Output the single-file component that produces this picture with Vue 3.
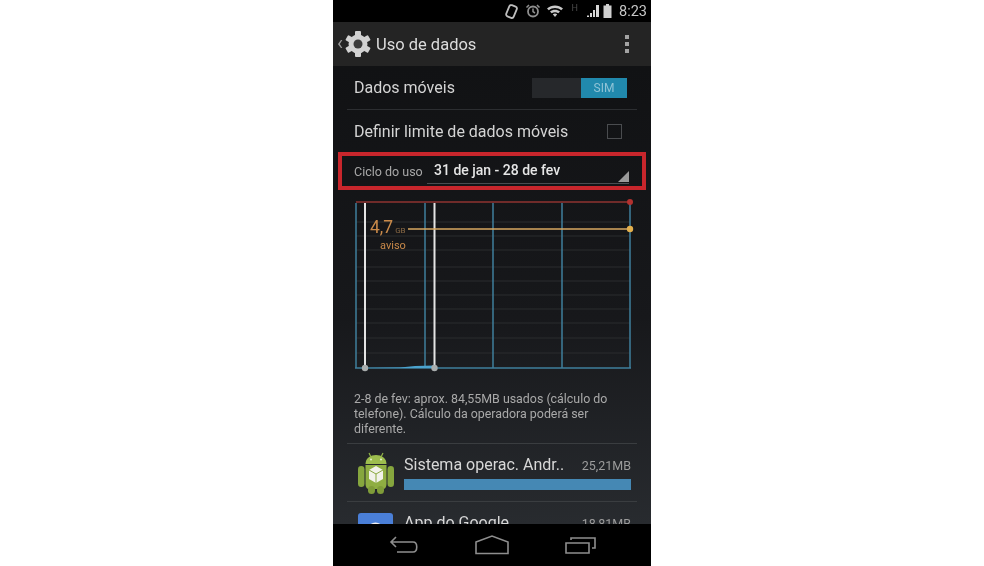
<script setup>
const gridRows = [222, 236, 250, 267, 281, 295, 309, 323, 338, 353]
const blueCols = [356, 425, 493, 562, 630]
</script>

<template>
  <div class="page">
    <div class="phone">
      <header class="status">
        <svg class="status-icon rotate" width="15" height="17" viewBox="0 0 15 17">
          <rect x="3.500" y="2.500" width="8" height="12" rx="2" transform="rotate(22 7.500 8.500)" fill="none" stroke="#bdbdbd" stroke-width="1.800" />
        </svg>
        <svg class="status-icon alarm" width="16" height="16" viewBox="0 0 16 16">
          <circle cx="8" cy="8.500" r="5" fill="none" stroke="#8f8f8f" stroke-width="1.800" />
          <path d="M8 5.500V8.700L10 10M1.500 4.500L4 2M14.500 4.500L12 2" fill="none" stroke="#8f8f8f" stroke-width="1.500" />
        </svg>
        <svg class="status-icon wifi" width="18" height="14" viewBox="0 0 18 14">
          <path d="M1 4.500C5.500 .5 12.500 .5 17 4.500L15.200 6.300C11.500 3.200 6.500 3.200 2.800 6.300Z" fill="#c9c9c9" />
          <path d="M4 7.500C6.800 5.200 11.200 5.200 14 7.500L12.300 9.200C10.400 7.800 7.600 7.800 5.700 9.200Z" fill="#c9c9c9" />
          <path d="M6.800 10.200C8 9.300 10 9.300 11.200 10.200L9 13Z" fill="#c9c9c9" />
        </svg>
        <span class="h-mark">H</span>
        <svg class="status-icon signal" width="15" height="14" viewBox="0 0 15 14">
          <path d="M1 13H3V11.500H1ZM4 13H6V9H4ZM7 13H9V6H7ZM10 13H13V1H10Z" fill="#d6d6d6" />
        </svg>
        <svg class="status-icon battery" width="9" height="14" viewBox="0 0 9 14">
          <path d="M3 0H6V1.500H8.500V14H.5V1.500H3Z" fill="#cfcfcf" />
        </svg>
        <span class="clock">8:23</span>
      </header>

      <div class="action-bar">
        <span class="back">‹</span>
        <svg class="gear" width="28" height="28" viewBox="0 0 28 28">
          <g fill="#d2d2d2">
            <rect x="11" y="1" width="6" height="26" rx="1" />
            <rect x="11" y="1" width="6" height="26" rx="1" transform="rotate(60 14 14)" />
            <rect x="11" y="1" width="6" height="26" rx="1" transform="rotate(120 14 14)" />
          </g>
          <circle cx="14" cy="14" r="7.500" fill="none" stroke="#d2d2d2" stroke-width="4" />
          <circle cx="14" cy="14" r="4.500" fill="#3a3a3a" />
        </svg>
        <h1 class="title">Uso de dados</h1>
        <div class="overflow">
          <i></i><i></i><i></i>
        </div>
      </div>

      <main class="content">
        <div class="row row-first">
          <span class="label">Dados móveis</span>
          <div class="switch">
            <span class="switch-on">SIM</span>
          </div>
        </div>
        <div class="row row-limit">
          <span class="label">Definir limite de dados móveis</span>
          <span class="checkbox"></span>
        </div>

        <div class="cycle">
          <span class="cycle-label">Ciclo do uso</span>
          <div class="spinner">
            <span class="spinner-value">31 de jan - 28 de fev</span>
            <svg class="spinner-mark" width="11" height="11" viewBox="0 0 11 11">
              <path d="M11 0V11H0Z" fill="#9a9a9a" />
            </svg>
          </div>
          <div class="highlight"></div>
        </div>

        <div class="chart">
          <svg width="318" height="184" viewBox="333 194 318 184">
            <line v-for="y in gridRows" :key="y" x1="356" x2="630" :y1="y" :y2="y" stroke="#2a2c2f" stroke-width="1" />
            <line v-for="x in blueCols" :key="x" :x1="x" :x2="x" y1="203" y2="368" stroke="#3f7f9c" stroke-width="1.500" />
            <line x1="355" x2="631" y1="368" y2="368" stroke="#3f7f9c" stroke-width="1.500" />
            <path d="M365 368L400 367.500L415 366L434 365.500V368Z" fill="#4ba3cf" />
            <line x1="356" x2="630" y1="202" y2="202" stroke="#8f3331" stroke-width="1.500" />
            <circle cx="630" cy="202" r="3" fill="#b3312f" />
            <line x1="365" x2="365" y1="203" y2="368" stroke="#e4e4e4" stroke-width="2" />
            <line x1="434.500" x2="434.500" y1="203" y2="368" stroke="#e4e4e4" stroke-width="2" />
            <line x1="408" x2="630" y1="229" y2="229" stroke="#d9a860" stroke-width="1.500" />
            <circle cx="630" cy="229" r="3.200" fill="#e3b04e" />
            <circle cx="365" cy="368" r="3.200" fill="#a9adad" />
            <circle cx="434.500" cy="368" r="3.200" fill="#a9adad" />
          </svg>
          <div class="warn">
            <div class="warn-value">4,7<small>GB</small></div>
            <div class="warn-label">aviso</div>
          </div>
        </div>

        <p class="note">2-8 de fev: aprox. 84,55MB usados (cálculo do telefone). Cálculo da operadora poderá ser diferente.</p>

        <div class="app">
          <svg class="app-icon" width="40" height="44" viewBox="0 0 40 44">
            <rect x="2" y="15" width="6.500" height="21" rx="3.250" fill="#86a63e" />
            <rect x="31.500" y="15" width="6.500" height="21" rx="3.250" fill="#86a63e" />
            <path d="M9.500 13C9.500 1 30.500 1 30.500 13Z" fill="#9dbd4e" />
            <path d="M9.500 14H30.500V33C30.500 36 29 38 27 38H13C11 38 9.500 36 9.500 33Z" fill="#8fae42" />
            <rect x="12" y="35" width="7" height="8" rx="3.500" fill="#7f9c39" />
            <rect x="21" y="35" width="7" height="8" rx="3.500" fill="#7f9c39" />
            <path d="M13 2L15 6M27 2L25 6" stroke="#93b548" stroke-width="1.200" />
            <circle cx="15" cy="8.500" r="1" fill="#e8efd2" />
            <circle cx="25" cy="8.500" r="1" fill="#e8efd2" />
            <path d="M20 15L27 19V28L20 32L13 28V19Z" fill="#f2f2ea" />
            <path d="M13 19L20 23L27 19M20 23V32" fill="none" stroke="#8aa93f" stroke-width="1" />
          </svg>
          <div class="app-body">
            <div class="app-line">
              <span class="app-name">Sistema operac. Andr..</span>
              <span class="app-size">25,21MB</span>
            </div>
            <div class="bar"></div>
          </div>
        </div>

        <div class="app">
          <svg class="app-icon" width="40" height="44" viewBox="0 0 40 44">
            <rect x="2" y="4" width="35" height="36" rx="3" fill="#4a7fd8" />
            <circle cx="19.500" cy="22" r="7" fill="none" stroke="#f0f0f0" stroke-width="3" />
          </svg>
          <div class="app-body">
            <div class="app-line">
              <span class="app-name">App do Google</span>
              <span class="app-size">18,81MB</span>
            </div>
            <div class="bar bar-second"></div>
          </div>
        </div>
      </main>

      <footer class="nav">
        <svg width="30" height="20" viewBox="0 0 30 20">
          <path d="M7 2L2 7L7 12M2 7H24C29 7 29 17 24 17H8" fill="none" stroke="#8e8e8e" stroke-width="1.600" />
        </svg>
        <svg width="34" height="20" viewBox="0 0 34 20">
          <path d="M1 7L17 1L33 7V18.500H1Z" fill="none" stroke="#8e8e8e" stroke-width="1.600" />
        </svg>
        <svg width="32" height="20" viewBox="0 0 32 20">
          <path d="M1 8H24V18H1ZM6 5V3H30V13H27" fill="none" stroke="#8e8e8e" stroke-width="1.600" />
        </svg>
      </footer>
    </div>
  </div>
</template>

<style scoped>
.page {
  width: 984px;
  height: 566px;
  background: #fff;
  display: flex;
  padding-left: 333px;
  box-sizing: border-box;
  overflow: hidden;
  font-family: Roboto, "Liberation Sans", sans-serif;
}
.phone {
  width: 318px;
  height: 566px;
  display: flex;
  flex-direction: column;
  background: #000;
  filter: blur(0.5px);
}
.status {
  height: 22px;
  flex: none;
  background: #000;
  display: flex;
  align-items: center;
  justify-content: flex-end;
  padding-right: 4px;
  color: #c8c8c8;
}
.status-icon { flex: none; }
.rotate { margin-right: 6px; }
.alarm { margin-right: 5px; }
.h-mark {
  font-size: 9px;
  color: #4a4a4a;
  margin: -6px 8px 0 8px;
}
.signal { margin-right: 2px; }
.battery { margin-right: 7px; }
.clock {
  font-size: 14.500px;
  color: #c6c6c6;
}
.action-bar {
  height: 44px;
  flex: none;
  background: #242424;
  display: flex;
  align-items: center;
  padding-left: 4px;
  padding-right: 22px;
  box-sizing: border-box;
}
.back {
  font-size: 20px;
  line-height: 20px;
  color: #9a9a9a;
  width: 8px;
  margin-top: -3px;
}
.gear { margin-right: 4px; flex: none; margin-left: -1px; }
.title {
  flex: 1;
  margin: 0;
  font-size: 16.500px;
  font-weight: 400;
  color: #dcdcdc;
}
.overflow {
  display: flex;
  flex-direction: column;
  gap: 3px;
}
.overflow i {
  display: block;
  width: 4px;
  height: 4px;
  background: #a3a3a3;
}
.content {
  flex: 1;
  min-height: 0;
  overflow: hidden;
  background: linear-gradient(180deg, #111214 0%, #17181b 55%, #282b2f 100%);
  display: flex;
  flex-direction: column;
  padding: 0 14px;
}
.row {
  flex: none;
  display: flex;
  align-items: center;
  justify-content: space-between;
  padding: 0 7px;
}
.row-first {
  height: 43px;
  border-bottom: 1px solid #2c2e31;
}
.row-limit { height: 42px; }
.label {
  font-size: 16px;
  color: #d4d4d4;
}
.switch {
  width: 95px;
  height: 20px;
  background: #26282b;
  display: flex;
  justify-content: flex-end;
  margin-right: 3px;
}
.switch-on {
  width: 46px;
  background: #2189ad;
  color: #8fc3d6;
  font-size: 12px;
  line-height: 20px;
  text-align: center;
}
.checkbox {
  width: 13px;
  height: 13px;
  border: 1px solid #4a4c4f;
  margin-right: 8px;
}
.cycle {
  position: relative;
  flex: none;
  height: 38px;
  margin: 0 -9px;
  padding-left: 16px;
  display: flex;
  align-items: center;
}
.cycle-label {
  font-size: 12.500px;
  color: #a8a8a8;
  margin-right: 3px;
  width: 70px;
  flex: none;
}
.spinner {
  position: relative;
  width: 202px;
  height: 25px;
  display: flex;
  align-items: center;
  border-bottom: 1px solid #4a4c50;
  padding: 0 0 2px 7px;
  box-sizing: border-box;
}
.spinner-value {
  font-size: 14px;
  font-weight: 500;
  color: #e6e6e6;
}
.spinner-mark {
  position: absolute;
  right: 0;
  bottom: 1px;
}
.highlight {
  position: absolute;
  inset: 0;
  border: 4px solid #c8262c;
}
.chart {
  position: relative;
  flex: none;
  height: 184px;
  margin: 4px -14px 0;
}
.chart svg { display: block; }
.warn {
  position: absolute;
  left: 37px;
  top: 23px;
  width: 52px;
  color: #c98a4a;
}
.warn-value {
  font-size: 17.500px;
  line-height: 20px;
}
.warn-value small {
  font-size: 8px;
  margin-left: 2px;
  color: #8a6a45;
}
.warn-label {
  font-size: 11px;
  line-height: 9px;
  padding-left: 10px;
}
.note {
  flex: none;
  margin: 13px 0 0;
  padding: 0 7px;
  font-size: 12.400px;
  line-height: 15px;
  color: #a9a9a9;
  height: 52px;
  border-bottom: 1px solid #3a3d40;
  width: 276px;
}
.app {
  flex: none;
  height: 57px;
  display: flex;
  align-items: center;
  gap: 8px;
  padding: 0 6px 0 9px;
  border-bottom: 1px solid #3a3d40;
}
.app-icon { flex: none; }
.app-body { flex: 1; min-width: 0; }
.app-line {
  display: flex;
  align-items: baseline;
  justify-content: space-between;
}
.app-name {
  font-size: 16px;
  color: #d8d8d8;
}
.app-size {
  font-size: 12.500px;
  color: #9c9c9c;
}
.bar {
  height: 11px;
  margin-top: 5px;
  background: #4588b4;
}
.bar-second { width: 75%; }
.nav {
  height: 42px;
  flex: none;
  background: #000;
  display: flex;
  align-items: center;
  gap: 56px;
  padding-left: 56px;
}
</style>
